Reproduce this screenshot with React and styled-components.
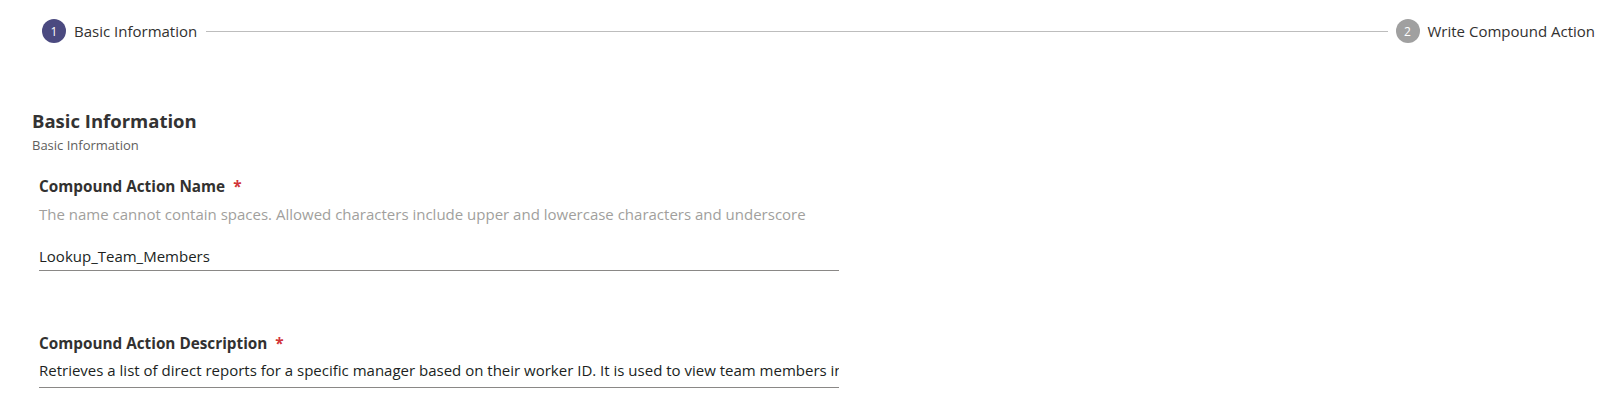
import React from 'react';
import styled, { createGlobalStyle } from 'styled-components';

const GlobalStyle = createGlobalStyle`
  body {
    margin: 0;
    background: #ffffff;
    font-family: 'Open Sans', 'Noto Sans', sans-serif;
    color: #323130;
  }
`;

const Page = styled.div`
  width: 1618px;
  height: 400px;
  overflow: hidden;
`;

const Stepper = styled.div`
  display: flex;
  align-items: center;
  height: 24px;
  padding: 19px 23px 0 42px;
`;

const Step = styled.div`
  display: flex;
  align-items: center;
  gap: 8px;
  flex-shrink: 0;
`;

const StepCircle = styled.span`
  width: 24px;
  height: 24px;
  border-radius: 50%;
  background: ${(p) => (p.active ? '#4b4a80' : '#a0a0a0')};
  color: #ffffff;
  font-size: 12px;
  display: flex;
  align-items: center;
  justify-content: center;
`;

const StepLabel = styled.span`
  font-size: 15px;
  color: #323130;
`;

const StepLine = styled.div`
  flex: 1;
  height: 1px;
  background: #bdbdbd;
  margin: 0 8px 0 9px;
`;

const Content = styled.div`
  padding: 66px 0 0 32px;
`;

const Title = styled.h2`
  margin: 0;
  font-size: 18.5px;
  line-height: 24px;
  font-weight: 700;
  color: #333333;
`;

const Subtitle = styled.div`
  margin-top: 4px;
  font-size: 13px;
  line-height: 16px;
  color: #605e5c;
`;

const Field = styled.div`
  width: 800px;
  margin-left: 7px;
  margin-top: ${(p) => p.top}px;
`;

const Label = styled.label`
  display: block;
  font-size: 15.3px;
  line-height: 20px;
  font-weight: 700;
  color: #323130;
`;

const Required = styled.span`
  color: #d13438;
  margin-left: 8px;
`;

const Hint = styled.div`
  font-size: 15px;
  line-height: 20px;
  color: #a19f9d;
  margin-top: 8px;
`;

const TextInput = styled.input`
  display: block;
  width: 100%;
  box-sizing: border-box;
  border: none;
  border-bottom: 1px solid #8a8886;
  outline: none;
  padding: 0;
  height: ${(p) => p.h}px;
  margin-top: ${(p) => p.gap}px;
  font-family: inherit;
  font-size: 15px;
  color: #201f1e;
  background: transparent;
`;

export default function App() {
  return (
    <Page>
      <GlobalStyle />
      <Stepper>
        <Step>
          <StepCircle active>1</StepCircle>
          <StepLabel>Basic Information</StepLabel>
        </Step>
        <StepLine />
        <Step>
          <StepCircle>2</StepCircle>
          <StepLabel>Write Compound Action</StepLabel>
        </Step>
      </Stepper>
      <Content>
        <Title>Basic Information</Title>
        <Subtitle>Basic Information</Subtitle>
        <Field top={23}>
          <Label>
            Compound Action Name<Required>*</Required>
          </Label>
          <Hint>The name cannot contain spaces. Allowed characters include upper and lowercase characters and underscore</Hint>
          <TextInput h={29} gap={18} defaultValue="Lookup_Team_Members" />
        </Field>
        <Field top={62}>
          <Label>
            Compound Action Description<Required>*</Required>
          </Label>
          <TextInput
            h={35}
            gap={0}
            defaultValue="Retrieves a list of direct reports for a specific manager based on their worker ID. It is used to view team members in an organization."
          />
        </Field>
      </Content>
    </Page>
  );
}
